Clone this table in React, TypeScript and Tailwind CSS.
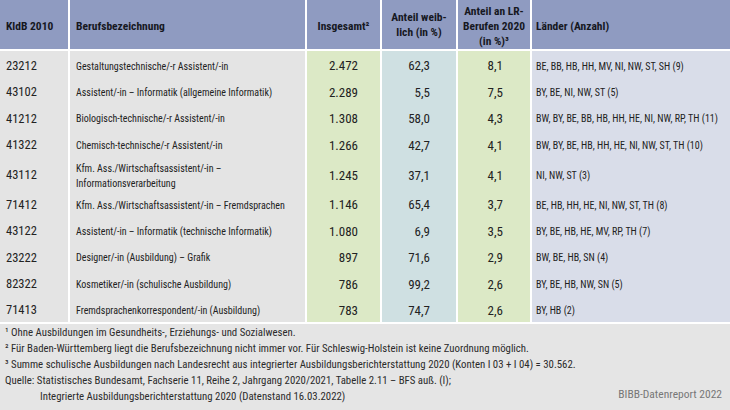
import React from 'react';

/**
 * Tabelle: Schulische Ausbildungen nach Landesrecht (BIBB-Datenreport 2022).
 * Spalten als festes Grid, weiße 2px-Trennlinien über den Grid-Gap.
 */

type Row = {
    code: string;
    title: React.ReactNode;
    total: string;
    female: string;
    share: string;
    states: string;
    tall?: boolean;
};

const rows: Row[] = [
    { code: '23212', title: 'Gestaltungstechnische/-r Assistent/-in', total: '2.472', female: '62,3', share: '8,1', states: 'BE, BB, HB, HH, MV, NI, NW, ST, SH (9)' },
    { code: '43102', title: 'Assistent/-in – Informatik (allgemeine Informatik)', total: '2.289', female: '5,5', share: '7,5', states: 'BY, BE, NI, NW, ST (5)' },
    { code: '41212', title: 'Biologisch-technische/-r Assistent/-in', total: '1.308', female: '58,0', share: '4,3', states: 'BW, BY, BE, BB, HB, HH, HE, NI, NW, RP, TH (11)' },
    { code: '41322', title: 'Chemisch-technische/-r Assistent/-in', total: '1.266', female: '42,7', share: '4,1', states: 'BW, BY, BE, HB, HH, HE, NI, NW, ST, TH (10)' },
    {
        code: '43112',
        title: (
            <>
                Kfm. Ass./Wirtschaftsassistent/-in –<br />Informationsverarbeitung
            </>
        ),
        total: '1.245',
        female: '37,1',
        share: '4,1',
        states: 'NI, NW, ST (3)',
        tall: true,
    },
    { code: '71412', title: 'Kfm. Ass./Wirtschaftsassistent/-in – Fremdsprachen', total: '1.146', female: '65,4', share: '3,7', states: 'BE, HB, HH, HE, NI, NW, ST, TH (8)' },
    { code: '43122', title: 'Assistent/-in – Informatik (technische Informatik)', total: '1.080', female: '6,9', share: '3,5', states: 'BY, BE, HB, HE, MV, RP, TH (7)' },
    { code: '23222', title: 'Designer/-in (Ausbildung) – Grafik', total: '897', female: '71,6', share: '2,9', states: 'BW, BE, HB, SN (4)' },
    { code: '82322', title: 'Kosmetiker/-in (schulische Ausbildung)', total: '786', female: '99,2', share: '2,6', states: 'BY, BE, HB, NW, SN (5)' },
    { code: '71413', title: 'Fremdsprachenkorrespondent/-in (Ausbildung)', total: '783', female: '74,7', share: '2,6', states: 'BY, HB (2)' },
];

const grid = 'grid grid-cols-[68px_235px_73px_74px_72px_198px] gap-x-[2px]';

export default function App() {
    return (
        <div className="w-[730px] h-[410px] bg-white overflow-hidden font-['Roboto_Condensed','Liberation_Sans',sans-serif] text-[#222]">
            {/* Kopfzeile */}
            <div className={`${grid} h-[49px] text-[11.5px] font-bold leading-[15px] text-[#16181f]`}>
                <div className="bg-[#8f9bc1] flex items-center pl-[6px] pt-[4px]">KldB 2010</div>
                <div className="bg-[#8f9bc1] flex items-center pl-[6px] pt-[4px]">Berufsbezeichnung</div>
                <div className="bg-[#8f9bc1] flex items-center justify-center pt-[4px]">Insgesamt²</div>
                <div className="bg-[#8f9bc1] flex items-center justify-center text-center pt-[1px]">
                    Anteil weib-<br />lich (in %)
                </div>
                <div className="bg-[#8f9bc1] flex items-center justify-center text-center pt-[4px]">
                    Anteil an LR-<br />Berufen 2020<br />(in %)³
                </div>
                <div className="bg-[#8f9bc1] flex items-center pl-[4px] pt-[4px]">Länder (Anzahl)</div>
            </div>

            {/* Datenzeilen */}
            <div className="mt-[2px]">
                {rows.map((r) => (
                    <div key={r.code} className={`${grid} ${r.tall ? 'h-[33.4px]' : 'h-[26.4px]'}`}>
                        <div className="bg-[#e4e4e4] flex items-center pl-[6px] pt-[4px] text-[12.5px]">{r.code}</div>
                        <div className="bg-[#e4e4e4] flex items-center pl-[6px] pt-[4px] text-[10px] leading-[15px]">
                            <span>{r.title}</span>
                        </div>
                        <div className="bg-[#dce9c6] flex items-center justify-end pr-[22px] pt-[4px] text-[13px]">{r.total}</div>
                        <div className="bg-[#cfe0e2] flex items-center justify-end pr-[26px] pt-[4px] text-[13px]">{r.female}</div>
                        <div className="bg-[#dce9c6] flex items-center justify-end pr-[27px] pt-[4px] text-[13px]">{r.share}</div>
                        <div className="bg-[#d9dde9] flex items-center pl-[4px] pt-[4px] text-[10px]">{r.states}</div>
                    </div>
                ))}
            </div>

            {/* Fußnoten und Quelle */}
            <div className="mt-[2px] h-[86px] bg-[#e5e5e5] pl-[5px] pr-[8px] pt-[1px] text-[10.8px] leading-[16px] text-[#2b2b2b]">
                <p>¹ Ohne Ausbildungen im Gesundheits-, Erziehungs- und Sozialwesen.</p>
                <p>² Für Baden-Württemberg liegt die Berufsbezeichnung nicht immer vor. Für Schleswig-Holstein ist keine Zuordnung möglich.</p>
                <p>³ Summe schulische Ausbildungen nach Landesrecht aus integrierter Ausbildungsberichterstattung 2020 (Konten I 03 + I 04) = 30.562.</p>
                <p>Quelle: Statistisches Bundesamt, Fachserie 11, Reihe 2, Jahrgang 2020/2021, Tabelle 2.11 – BFS auß. (I);</p>
                <div className="flex justify-between items-start">
                    <p className="pl-[35px]">Integrierte Ausbildungsberichterstattung 2020 (Datenstand 16.03.2022)</p>
                    <p className="text-[11.5px] text-[#777] -mt-[3px]">BIBB-Datenreport 2022</p>
                </div>
            </div>
        </div>
    );
}
